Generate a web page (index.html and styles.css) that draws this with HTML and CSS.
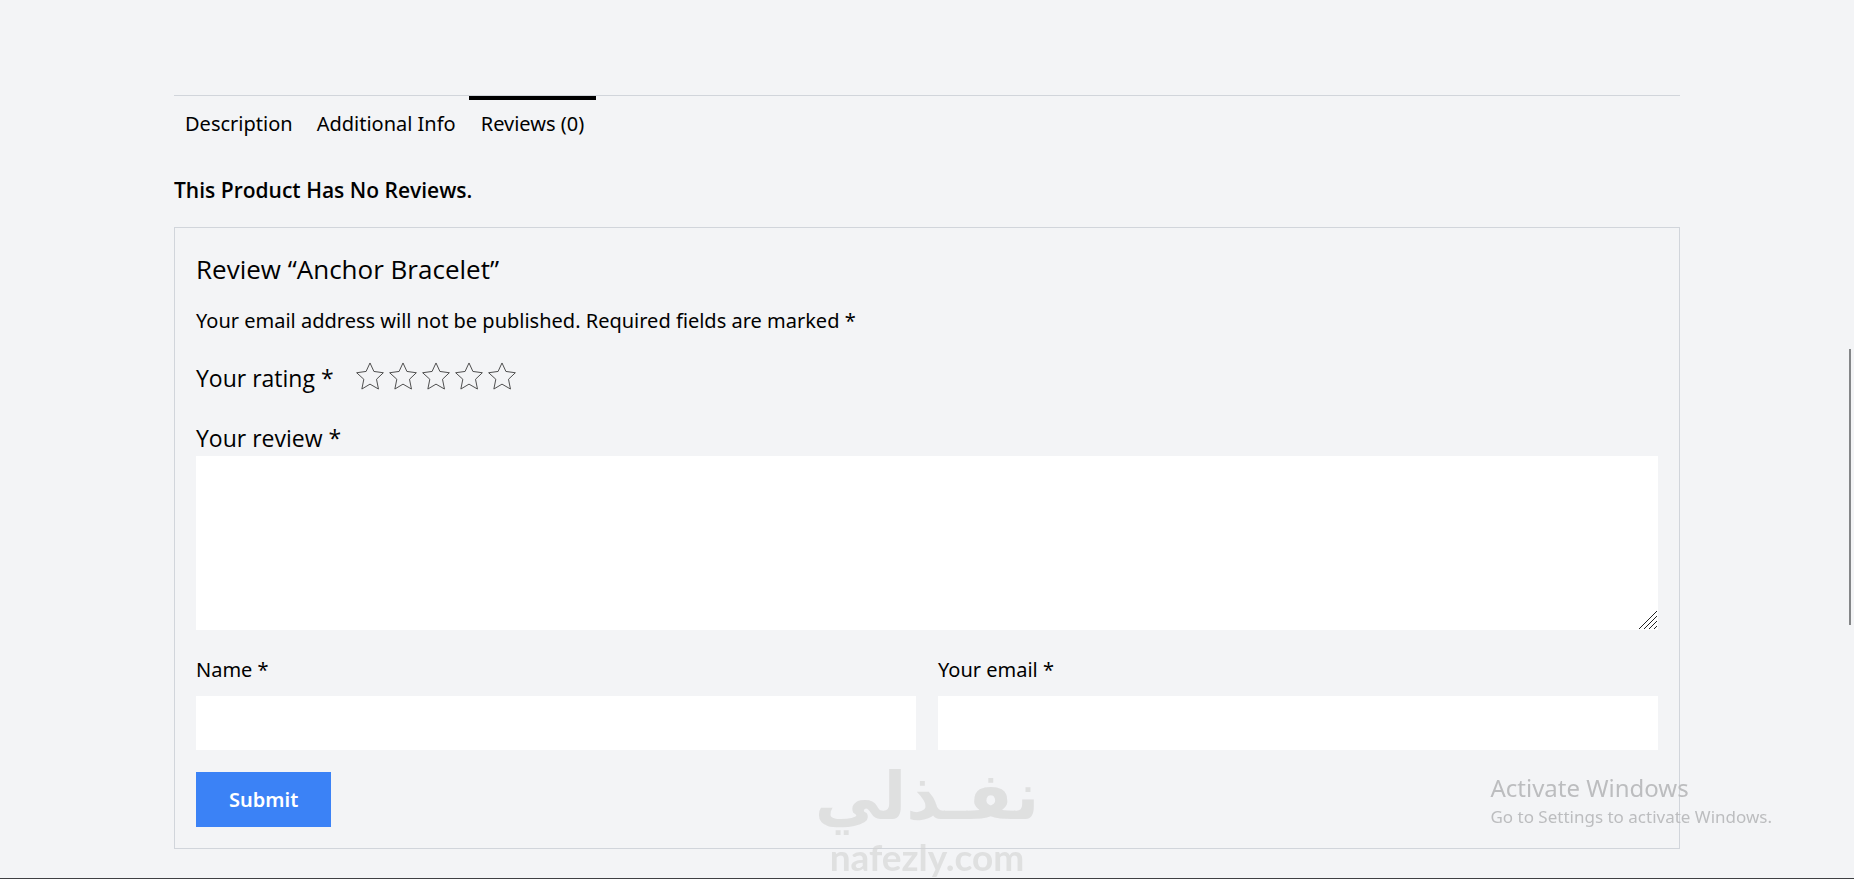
FILE: index.html
```html
<!DOCTYPE html>
<html lang="en">
<head>
<meta charset="utf-8">
<title>Anchor Bracelet – Reviews</title>
<meta name="viewport" content="width=device-width, initial-scale=1">
<link rel="stylesheet" href="styles.css">
</head>
<body>
<svg class="defs" aria-hidden="true">
  <symbol id="star" viewBox="-2 -2 86 84"><path d="M41 0 53 26 82 30 61 50 67 80 41 65 16 80 22 50 0 30 29 26Z"/></symbol>
</svg>
<main class="product">
  <nav class="tabs">
    <a class="tab" href="#description">Description</a>
    <a class="tab" href="#info">Additional Info</a>
    <a class="tab tab-active" href="#reviews">Reviews (0)</a>
  </nav>
  <h2 class="empty">This Product Has No Reviews.</h2>
  <form class="review" id="reviews">
    <h3 class="title">Review “Anchor Bracelet”</h3>
    <p class="note">Your email address will not be published. Required fields are marked *</p>
    <fieldset class="rating">
      <legend class="sr">Rating</legend>
      <span class="caption">Your rating *</span>
      <div class="stars">
        <label class="star"><input class="sr" type="radio" name="rating" value="1" aria-label="1 star"><svg class="star-icon"><use href="#star"/></svg></label>
        <label class="star"><input class="sr" type="radio" name="rating" value="2" aria-label="2 stars"><svg class="star-icon"><use href="#star"/></svg></label>
        <label class="star"><input class="sr" type="radio" name="rating" value="3" aria-label="3 stars"><svg class="star-icon"><use href="#star"/></svg></label>
        <label class="star"><input class="sr" type="radio" name="rating" value="4" aria-label="4 stars"><svg class="star-icon"><use href="#star"/></svg></label>
        <label class="star"><input class="sr" type="radio" name="rating" value="5" aria-label="5 stars"><svg class="star-icon"><use href="#star"/></svg></label>
      </div>
    </fieldset>
    <label class="caption" for="message">Your review *</label>
    <div class="message">
      <textarea class="area" id="message" name="message"></textarea>
      <svg class="grip" viewBox="0 0 18 18" aria-hidden="true"><path d="M0 18 18 0M5 18 18 5M10 18 18 10M15 18 18 15"/></svg>
    </div>
    <div class="fields">
      <div class="field">
        <label class="label" for="name">Name *</label>
        <input class="input" id="name" name="name" type="text">
      </div>
      <div class="field">
        <label class="label" for="email">Your email *</label>
        <input class="input" id="email" name="email" type="email">
      </div>
    </div>
    <button class="submit" type="submit">Submit</button>
  </form>
</main>
<div class="watermark">
  <span class="mark-ar" lang="ar" dir="rtl">نفـذلي</span>
  <span class="mark-en">nafezly.com</span>
</div>
<div class="activate">
  <div class="activate-title">Activate Windows</div>
  <div class="activate-text">Go to Settings to activate Windows.</div>
</div>
<div class="scroll-thumb"></div>
<div class="edge"></div>
</body>
</html>
```
FILE: styles.css
```css
* { box-sizing: border-box; }

body {
  margin: 0;
  min-height: 100vh;
  overflow: hidden;
  background: #f3f4f6;
  color: #000;
  font-family: "Noto Sans", "Open Sans", sans-serif;
  font-size: 20px;
  line-height: 32px;
}

.defs { display: none; }

.sr {
  position: absolute;
  width: 1px;
  height: 1px;
  margin: 0;
  padding: 0;
  opacity: 0;
  overflow: hidden;
}

.product {
  max-width: 1550px;
  margin: 0 auto;
  padding: 95px 22px 0;
}

.tabs {
  display: flex;
  gap: 2px;
  border-top: 1px solid #d1d5db;
}

.tab {
  padding: 12px 11px 0;
  color: inherit;
  text-decoration: none;
}

.tab-active {
  padding: 8px 12px 0;
  border-top: 4px solid #000;
}

.empty {
  margin: 34px 0 21px;
  font-family: "Open Sans", sans-serif;
  font-size: 21px;
  font-weight: 600;
}

.review {
  padding: 21px;
  border: 1px solid #d1d5db;
}

.title {
  margin: 4px 0 0;
  font-family: "Open Sans", sans-serif;
  font-size: 26px;
  font-weight: 400;
}

.note { margin: 20px 0 0; }

.rating {
  display: flex;
  align-items: center;
  gap: 22px;
  margin: 25px 0 28px;
  padding: 0;
  border: 0;
}

.caption {
  display: block;
  font-family: "Open Sans", sans-serif;
  font-size: 23px;
}

.stars {
  display: flex;
  gap: 5px;
  padding-bottom: 4px;
}

.star {
  display: flex;
  position: relative;
}

.star-icon {
  width: 28px;
  height: 28px;
  fill: none;
  stroke: #4b4b4b;
  stroke-width: 3;
}

.message {
  display: grid;
  position: relative;
  margin-top: 2px;
}

.area {
  height: 174px;
  padding: 11px;
  border: 0;
  resize: none;
  background: #fff;
  font: inherit;
}

.grip {
  position: absolute;
  right: 1px;
  bottom: 1px;
  width: 18px;
  height: 18px;
  fill: none;
  stroke: #222;
}

.fields {
  display: grid;
  grid-template-columns: 1fr 1fr;
  gap: 22px;
  margin: 24px 0 22px;
}

.field {
  display: grid;
  gap: 10px;
}

.input {
  width: 100%;
  height: 54px;
  padding: 0 11px;
  border: 0;
  background: #fff;
  font: inherit;
}

.submit {
  display: block;
  height: 55px;
  padding: 0 33px;
  border: 0;
  background: #3b82f6;
  color: #fff;
  font: inherit;
  font-weight: 600;
}

.watermark {
  position: fixed;
  bottom: 0;
  left: 50%;
  display: flex;
  flex-direction: column;
  align-items: center;
  transform: translateX(-50%);
  color: #d2d2d2;
  opacity: 0.6;
  font-weight: 700;
  white-space: nowrap;
  pointer-events: none;
}

.mark-ar {
  font-family: "DejaVu Sans", sans-serif;
  font-size: 66px;
  line-height: 76px;
}

.mark-en {
  font-family: Lato, sans-serif;
  font-size: 37px;
  line-height: 44px;
}

.activate {
  position: fixed;
  right: 82px;
  bottom: 50px;
  color: #bcbdbf;
  font-size: 17px;
  line-height: 24px;
  pointer-events: none;
}

.activate-title {
  font-size: 24px;
  line-height: 34px;
}

.scroll-thumb {
  position: fixed;
  top: 349px;
  right: 3px;
  width: 2px;
  height: 276px;
  background: #848688;
}

.edge {
  position: fixed;
  right: 0;
  bottom: 0;
  left: 0;
  height: 1px;
  background: #3f4043;
}
```
